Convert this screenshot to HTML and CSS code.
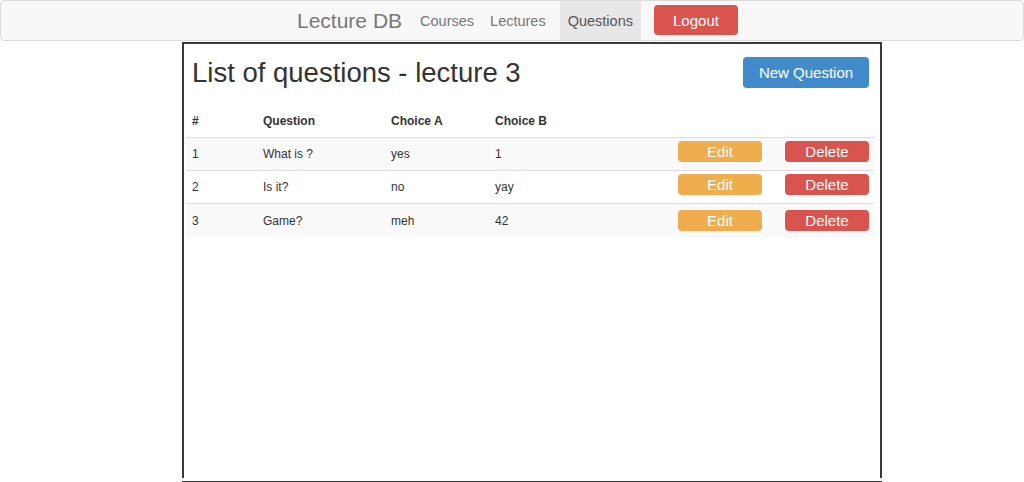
FILE: index.html
```html
<!DOCTYPE html>
<html>
<head>
<meta charset="utf-8">
<link rel="stylesheet" href="styles.css">
</head>
<body>
<nav class="navbar">
  <div class="nav-inner">
    <a class="brand">Lecture DB</a>
    <a class="nav-link">Courses</a>
    <a class="nav-link">Lectures</a>
    <a class="nav-link active">Questions</a>
    <a class="btn btn-danger logout">Logout</a>
  </div>
</nav>
<main class="box">
  <div class="head">
    <h2 class="title">List of questions - lecture 3</h2>
    <a class="btn btn-primary new-btn">New Question</a>
  </div>
  <table class="table">
    <colgroup>
      <col class="c1"><col class="c2"><col class="c3"><col class="c4"><col class="c5"><col class="c6">
    </colgroup>
    <thead>
      <tr><th>#</th><th>Question</th><th>Choice A</th><th>Choice B</th><th></th><th></th></tr>
    </thead>
    <tbody>
      <tr class="odd"><td>1</td><td>What is ?</td><td>yes</td><td>1</td><td class="act"><a class="btn btn-warning sm">Edit</a></td><td class="act"><a class="btn btn-danger sm">Delete</a></td></tr>
      <tr><td>2</td><td>Is it?</td><td>no</td><td>yay</td><td class="act"><a class="btn btn-warning sm">Edit</a></td><td class="act"><a class="btn btn-danger sm">Delete</a></td></tr>
      <tr class="odd last"><td>3</td><td>Game?</td><td>meh</td><td>42</td><td class="act"><a class="btn btn-warning sm">Edit</a></td><td class="act"><a class="btn btn-danger sm">Delete</a></td></tr>
    </tbody>
  </table>
</main>
<div class="bottom-line"></div>
</body>
</html>
```
FILE: styles.css
```css
html, body {
  margin: 0;
  padding: 0;
  background: #fff;
}
body {
  font-family: "Liberation Sans", Arial, Helvetica, sans-serif;
  font-size: 14px;
  color: #333;
}
.navbar {
  height: 39px;
  border: 1px solid #dcdcdc;
  border-radius: 4px;
  background: #f8f8f8;
}
.nav-inner {
  display: flex;
  align-items: stretch;
  height: 39px;
  padding-left: 281px;
}
.brand {
  display: flex;
  align-items: center;
  padding: 0 10px 0 15px;
  font-size: 21px;
  color: #777;
}
.nav-link {
  display: flex;
  align-items: center;
  padding: 0 8px;
  font-size: 14.5px;
  color: #777;
}
.nav-link.active {
  background: #e7e7e7;
  color: #555;
  padding: 0 8px;
  margin-left: 6px;
}
.btn {
  display: inline-flex;
  align-items: center;
  justify-content: center;
  color: #fff;
  border-radius: 4px;
  box-sizing: border-box;
}
.btn-danger { background: #d9534f; }
.btn-warning { background: #f0ad4e; }
.btn-primary { background: #428bca; }
.logout {
  align-self: flex-start;
  margin: 4px 0 0 13px;
  width: 84px;
  height: 30px;
  font-size: 15px;
}
.box {
  margin-left: 182px;
  margin-top: 1px;
  height: 434px;
  border: 2px solid #3a3a3a;
  border-bottom: 0;
  padding: 0 4px 0 2px;
  box-sizing: content-box;
  width: 690px;
}
.bottom-line {
  margin-left: 182px;
  margin-top: 3px;
  width: 700px;
  height: 2px;
  background: #3a3a3a;
}
.head {
  display: flex;
  justify-content: space-between;
  align-items: flex-start;
  padding: 14px 7px 0 6px;
  height: 46px;
}
.title {
  margin: -2px 0 0 0;
  font-size: 27.5px;
  font-weight: normal;
  line-height: 34px;
  color: #333;
}
.new-btn {
  width: 126px;
  height: 31px;
  font-size: 15px;
  margin-top: -1px;
}
.table {
  width: 688px;
  border-collapse: collapse;
  table-layout: fixed;
  font-size: 12px;
}
.c1 { width: 71px; }
.c2 { width: 128px; }
.c3 { width: 104px; }
.c4 { width: 183px; }
.c5 { width: 107px; }
.c6 { width: 95px; }
th {
  text-align: left;
  font-weight: bold;
  padding: 0 6px;
  height: 33px;
  vertical-align: middle;
  border-bottom: 1px solid #ddd;
}
td {
  padding: 0 6px;
  height: 32px;
  vertical-align: middle;
  border-bottom: 1px solid #ddd;
}
td.act {
  vertical-align: top;
  padding-top: 3px;
  box-sizing: border-box;
}
tr.odd td { background: #f9f9f9; }
tr.last td { border-bottom: 0; height: 34px; }
tr.last td.act { padding-top: 6px; }
.sm {
  width: 84px;
  height: 21px;
  font-size: 15px;
}
```
